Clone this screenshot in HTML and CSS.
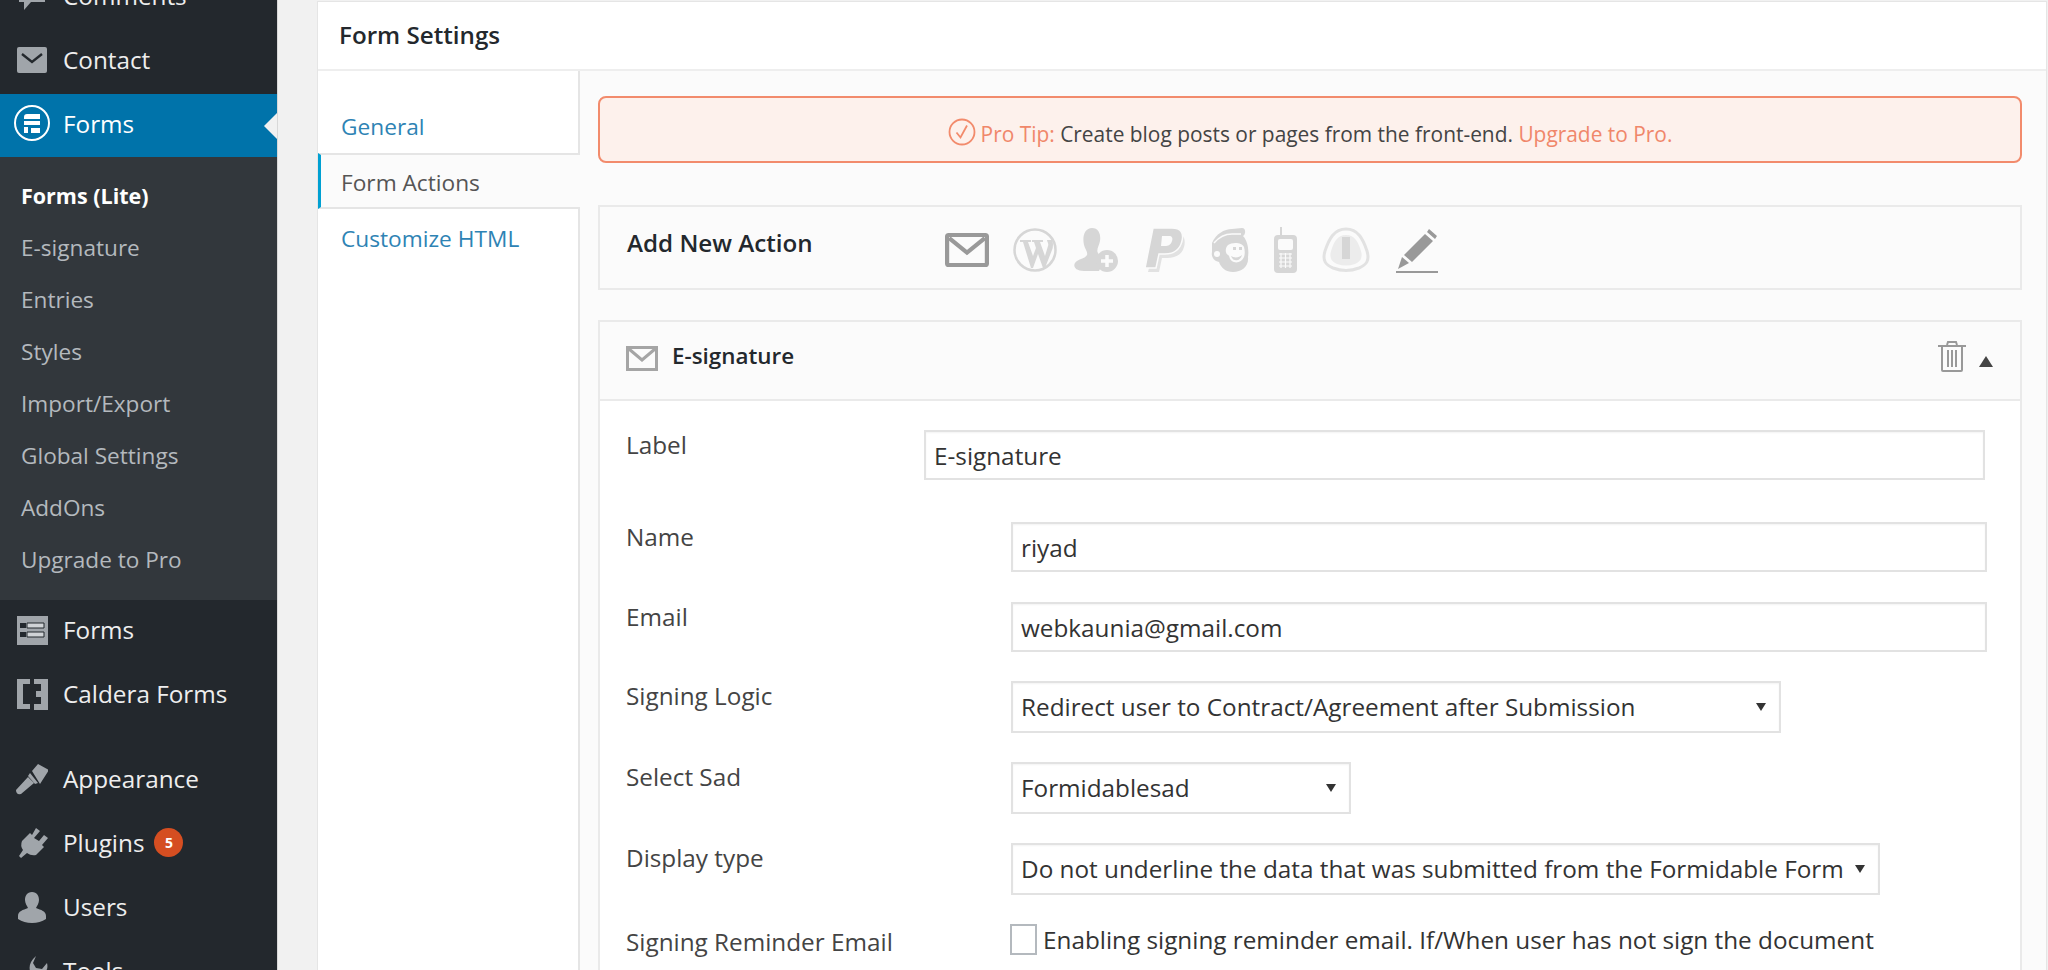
FILE: index.html
```html
<!DOCTYPE html>
<html>
	<head>
		<meta charset="UTF-8">
		<title>Form Settings</title>
		<link rel="stylesheet" href="styles.css">
	</head>
	<body>
		<div id="adminMenu">
			<ul class="menu">
				<li class="menu-item">
					<svg class="menu-icon" viewBox="0 0 32 32"><path d="M3 3h26v19H15l-7 8v-8H3z"/></svg>Comments
				</li>
				<li class="menu-item contact">
					<svg class="menu-icon" viewBox="0 0 32 32"><path d="M3 3h26a2 2 0 0 1 2 2v22a2 2 0 0 1-2 2H3a2 2 0 0 1-2-2V5a2 2 0 0 1 2-2z"/><path class="cut" d="M6 10l10 8 10-8" fill="none" stroke-width="2.4"/></svg>Contact
				</li>
				<li class="menu-item current">
					<svg class="menu-icon big" viewBox="0 0 38 38">
						<circle cx="19" cy="19" r="17" fill="none" stroke="#fff" stroke-width="2"/>
						<path fill="#fff" d="M11 13q0-3 3-3h13v5H11zM11 17h16v4H11zM11 23h4v6h-4zM18 24h9v5h-9z"/>
					</svg>Forms
				</li>
			</ul>
			<ul class="submenu">
				<li class="active">Forms (Lite)</li>
				<li>E-signature</li>
				<li>Entries</li>
				<li>Styles</li>
				<li>Import/Export</li>
				<li>Global Settings</li>
				<li>AddOns</li>
				<li>Upgrade to Pro</li>
			</ul>
			<ul class="menu">
				<li class="menu-item">
					<svg class="menu-icon" viewBox="0 0 32 32"><path d="M1 2h31v29H1z"/><path class="hole" d="M4 9h6v5H4zM4 18h6v5H4z"/><path class="bar" d="M11 9h17v5H11zM11 18h17v5H11z"/></svg>Forms
				</li>
				<li class="menu-item">
					<svg class="menu-icon" viewBox="0 0 32 32"><path d="M1 1h13v5H7v20h7v5H1zM18 1h14v31H18v-6h7v-7h-5v-6h5V6h-7z"/></svg>Caldera Forms
				</li>
				<li class="menu-item gap">
					<svg class="menu-icon" viewBox="0 0 32 32"><path d="M16 8l6-7 11 6-9 14zM14 10l8 10-3 1-7-8zM12 14l6 6L5 31q-5 1-5-4z"/></svg>Appearance
				</li>
				<li class="menu-item">
					<svg class="menu-icon" viewBox="0 0 32 32"><path d="M20 1l4 3-6 7 5 3 5-6 4 3-6 7 2 2-8 8q-5 1-9-2l-6 5-2-2 4-6q-3-4-1-9l8-8 2 2z"/></svg>Plugins<span class="count">5</span>
				</li>
				<li class="menu-item">
					<svg class="menu-icon" viewBox="0 0 32 32"><path d="M16 1c5 0 7 4 7 8 0 3-2 6-3 8 5 2 10 3 10 8v3q-6 4-14 4t-14-4v-3c0-5 5-6 10-8-1-2-3-5-3-8 0-4 2-8 7-8z"/></svg>Users
				</li>
				<li class="menu-item">
					<svg class="menu-icon" viewBox="0 0 32 32"><path d="M20 1l-3 7 3 5 6 1 5-6q2 8-5 11-3 1-5 0L9 31q-5 2-7-3l12-12q-2-8 6-15z"/></svg>Tools
				</li>
			</ul>
		</div>

		<div id="panel">
			<div class="panel-title">Form Settings</div>
			<div class="panel-body">
				<ul class="tabs">
					<li>General</li>
					<li class="on">Form Actions</li>
					<li>Customize HTML</li>
				</ul>
				<div class="content">
					<div class="tip">
						<svg class="tip-icon" viewBox="0 0 28 28"><circle cx="14" cy="14" r="12.5"/><path d="M8.5 14.5l4 5 6.5-12"/></svg>
						<span class="tip-label">Pro Tip:</span>&nbsp;Create blog posts or pages from the front-end.&nbsp;<span class="tip-label">Upgrade to Pro.</span>
					</div>

					<div class="box add-action">
						<h3>Add New Action</h3>
						<div class="actions">
							<svg class="act a-wp" width="44" height="34" viewBox="0 0 42 33" preserveAspectRatio="none"><rect x="2" y="2" width="38" height="29" rx="1.5" fill="none" stroke="#999" stroke-width="4"/><path d="M4 5l17 14L38 5" fill="none" stroke="#999" stroke-width="4"/></svg>
							<svg class="act a-user" width="44" height="44" viewBox="0 0 44 44"><circle cx="22" cy="22" r="20.5" fill="none" stroke="#d6d6d6" stroke-width="2.5"/><path d="M7 12h11v2h-3l5 14 3-8-2-6h-2v-2h11v2h-3l5 14 3-10c1-3-1-4-1-6h5q2 5 0 10l-7 18h-2l-5-14-5 14h-2L10 14H7z" fill="#d6d6d6"/></svg>
							<svg class="act" width="44" height="44" viewBox="0 0 44 44" fill="#d6d6d6"><path d="M18 0c7 0 9 7 8 13-1 5-4 9-2 12 1 2 2 3 1 6-1 2 0 5 2 8l-2 4H10C1 43-1 38 1 35c2-4 10-4 12-8 1-3-2-6-3-10C8 8 11 0 18 0z"/><circle cx="33" cy="33" r="11" /><path d="M33 27v12M27 33h12" stroke="#fbfbfb" stroke-width="3.5"/></svg>
							<svg class="act" width="44" height="46" viewBox="0 0 44 46"><path d="M16 6h18c8 0 10 7 8 14-2 8-9 11-17 11h-5l-3 14H6z" fill="#e2e2e2"/><path d="M11 1h19c9 0 12 5 10 13-2 9-9 13-17 13h-6l-3 14H3z" fill="#d6d6d6" stroke="#fbfbfb" stroke-width="1.5"/><path d="M20 9h7c3 0 4 2 3 5-1 4-4 5-7 5h-4z" fill="#fbfbfb"/></svg>
							<svg class="act" width="40" height="46" viewBox="0 0 40 46"><path d="M2 16C6 7 14 2 22 2l10-1c4 0 4 6 1 8 5 5 6 15 5 21 1 9-6 15-15 15-7 0-12-4-14-10-5-1-8-5-7-10z" fill="#d6d6d6"/><path d="M4 16C9 10 15 7 22 7l9 0" fill="none" stroke="#fbfbfb" stroke-width="1.5"/><path d="M18 18c4-3 14-3 16 2 1 4 1 7 0 10-2 5-8 7-12 4-3-2-2-5-4-6-3-2-3-7 0-10z" fill="#fbfbfb"/><path d="M21 29c3 2 8 2 11-1-1 4-4 6-7 5-2 0-3-2-4-4zM23 20h3v3h-3zM29 20h3v3h-3z" fill="#d6d6d6"/><circle cx="7" cy="27" r="3" fill="#fbfbfb"/></svg>
							<svg class="act" width="23" height="46" viewBox="0 0 23 46"><path d="M6 0h2v8h11q4 0 4 4v30q0 4-4 4H4q-4 0-4-4V12q0-4 4-4h2z" fill="#d6d6d6"/><rect x="4" y="12" width="15" height="11" rx="2" fill="#fbfbfb"/><path d="M5 27h13M5 31h13M5 35h13M5 39h13M7 26v15M11.500 26v15M16 26v15" stroke="#fbfbfb" stroke-width="1.200"/></svg>
							<svg class="act" width="50" height="46" viewBox="0 0 50 46"><path d="M25 2c12 0 17 10 21 22 3 10-1 14-8 17-8 3-18 3-26 0-7-3-11-7-8-17C8 12 13 2 25 2z" fill="none" stroke="#e2e2e2" stroke-width="3"/><path d="M25 8c9 0 12 7 15 16 2 7-1 11-6 13-6 2-12 2-18 0-5-2-8-6-6-13C13 15 16 8 25 8z" fill="#ececec"/><path d="M21 10h8v22h-8z" fill="#d6d6d6"/></svg>
							<svg class="act" width="44" height="46" viewBox="0 0 44 46"><path d="M34 2l8 7-2 3-8-7zM30 7l8 7-21 21-8-7z" fill="#999"/><path d="M7 30l7 6-11 6z" fill="#999"/><path d="M1 45h42" stroke="#999" stroke-width="2"/></svg>
						</div>
					</div>

					<div class="box action">
						<div class="action-head">
							<svg class="head-icon" width="32" height="25" viewBox="0 0 32 25"><rect x="1.500" y="1.500" width="29" height="22" fill="none" stroke="#a5a5a5" stroke-width="3"/><path d="M3 3l13 11L29 3" fill="none" stroke="#a5a5a5" stroke-width="3"/></svg>
							<h4>E-signature</h4>
							<svg class="trash" width="28" height="31" viewBox="0 0 28 31" fill="none" stroke="#999" stroke-width="2"><path d="M0 5h28M9 4l1-3h8l1 3"/><path d="M4 5v24q0 1 1 1h18q1 0 1-1V5M10 9v17M14 9v17M18 9v17"/></svg>
							<span class="toggle"></span>
						</div>
						<div class="action-body">
							<div class="row first">
								<label>Label</label>
								<div class="field wide">E-signature</div>
							</div>
							<div class="row name">
								<label>Name</label>
								<div class="field">riyad</div>
							</div>
							<div class="row">
								<label>Email</label>
								<div class="field">webkaunia@gmail.com</div>
							</div>
							<div class="row">
								<label>Signing Logic</label>
								<div class="field select logic">Redirect user to Contract/Agreement after Submission</div>
							</div>
							<div class="row">
								<label>Select Sad</label>
								<div class="field select sad">Formidablesad</div>
							</div>
							<div class="row">
								<label>Display type</label>
								<div class="field select display">Do not underline the data that was submitted from the Formidable Form</div>
							</div>
							<div class="row last">
								<label>Signing Reminder Email</label>
								<div class="check"><span class="checkbox"></span>Enabling signing reminder email. If/When user has not sign the document</div>
							</div>
						</div>
					</div>
				</div>
			</div>
		</div>
	</body>
</html>
```

FILE: styles.css
```css
*{
	padding: 0;
	margin: 0;
	box-sizing: border-box;
}
html,body{
	height: 970px;
	overflow: hidden;
}
body{
	display: flex;
	background-color: #f1f1f1;
	font-family: "Open Sans", sans-serif;
	font-size: 24.300px;
	color: #444;
}
ul{
	list-style: none;
}

/* left admin menu */
#adminMenu{
	width: 278px;
	flex: none;
	height: 970px;
	background-color: #23282d;
	border-right: 1px solid #d8d8d8;
	overflow: hidden;
}
.menu:first-child{
	margin-top: -34px;
}
.menu-item{
	height: 64px;
	display: flex;
	align-items: center;
	padding: 0 0 5px 16px;
	color: #eee;
	position: relative;
}
.menu-icon{
	width: 32px;
	height: 32px;
	margin-right: 15px;
	fill: #a0a5aa;
	flex: none;
}
.menu-icon .cut{
	stroke: #23282d;
}
.menu-icon .hole{
	fill: #23282d;
}
.menu-icon .bar{
	fill: #d0d3d6;
	stroke: #23282d;
}
.menu-icon.big{
	width: 38px;
	height: 38px;
	margin-left: -3px;
	margin-right: 12px;
}
.menu-item.current{
	height: 63px;
	background-color: #0073aa;
	color: #fff;
}
.menu-item.current::after{
	content: "";
	position: absolute;
	right: 0;
	top: 19px;
	border: 13px solid transparent;
	border-left-width: 0;
	border-right-color: #f1f1f1;
}
.menu-item.gap{
	margin-top: 21px;
}
.count{
	width: 29px;
	height: 29px;
	margin-left: 10px;
	border-radius: 50%;
	background-color: #d54e21;
	color: #fff;
	font-size: 14px;
	font-weight: 700;
	line-height: 29px;
	text-align: center;
}
.submenu{
	height: 443px;
	padding-top: 13.500px;
	background-color: #32373c;
	font-size: 22.600px;
	color: #b4b9be;
}
.submenu li{
	height: 51.900px;
	line-height: 51.900px;
	padding-left: 21px;
}
.submenu .active{
	line-height: 50px;
	color: #fff;
	font-size: 21.500px;
	font-weight: 700;
}

/* form settings panel */
#panel{
	width: 1730px;
	height: 970px;
	margin: 1px 0 0 39px;
	flex: none;
	background-color: #fff;
	border: 1px solid #e5e5e5;
	border-bottom: 0;
}
.panel-title{
	height: 69px;
	line-height: 65px;
	padding-left: 21px;
	border-bottom: 2px solid #eee;
	font-size: 24.200px;
	font-weight: 600;
	color: #23282d;
}
.panel-body{
	display: flex;
	height: 900px;
}
.tabs{
	width: 262px;
	flex: none;
	padding-top: 26px;
	border-right: 2px solid #e5e5e5;
	font-size: 22.700px;
	color: #2e83b4;
}
.tabs li{
	height: 56px;
	line-height: 59px;
	padding-left: 23px;
}
.tabs .on{
	line-height: 56px;
	background-color: #fbfbfb;
	margin-right: -2px;
	border-top: 2px solid #e5e5e5;
	border-bottom: 2px solid #e5e5e5;
	border-left: 3px solid #00a0d2;
	padding-left: 20px;
	color: #555;
}
.content{
	flex: 1;
	min-width: 0;
	background-color: #fbfbfb;
	padding: 25px 24px 0 18px;
}

.tip{
	height: 67px;
	display: flex;
	align-items: center;
	justify-content: center;
	padding-top: 8px;
	background-color: #fdf1ec;
	border: 2px solid #f28b6c;
	border-radius: 8px;
	font-size: 20.900px;
	color: #444;
}
.tip-icon{
	width: 28px;
	height: 28px;
	margin: -4px 5px 0 0;
	fill: none;
	stroke: #f28b6c;
	stroke-width: 1.800;
}
.tip-label{
	color: #f0876a;
}

.box{
	border: 2px solid #eaeaea;
}
.add-action{
	height: 85px;
	margin-top: 42px;
	display: flex;
	align-items: center;
	padding-left: 27px;
}
.add-action h3{
	width: 318px;
	flex: none;
	margin-top: -11px;
	font-size: 24.200px;
	font-weight: 600;
	color: #23282d;
}
.actions{
	display: flex;
	align-items: center;
	margin-top: 5px;
}
.act{
	flex: none;
	margin-right: 24px;
}
.a-user{
	margin-right: 17px;
}
.action{
	margin-top: 30px;
	height: 700px;
	background-color: #fff;
}
.action-head{
	height: 79px;
	display: flex;
	align-items: center;
	background-color: #fbfbfb;
	border-bottom: 2px solid #eaeaea;
	padding: 0 27px 0 26px;
}
.head-icon{
	margin: -4px 14px 0 0;
	flex: none;
}
.action-head h4{
	flex: 1;
	margin-top: -10px;
	font-size: 22.400px;
	font-weight: 600;
	color: #23282d;
}
.trash{
	margin: -8px 13px 0 0;
}
.toggle{
	width: 0;
	height: 0;
	margin-top: 2px;
	border-left: 7px solid transparent;
	border-right: 7px solid transparent;
	border-bottom: 11px solid #444;
}

.action-body{
	padding: 29px 33px 0 26px;
}
.row{
	display: flex;
	margin-bottom: 29px;
	align-items: flex-start;
}
.row label{
	width: 385px;
	flex: none;
	font-size: 24.300px;
	line-height: 30px;
	white-space: nowrap;
	color: #444;
}
.row.first{
	margin-bottom: 42px;
}
.row.first label{
	width: 298px;
}
.row.name{
	margin-bottom: 30px;
}
.field{
	height: 50px;
	flex: 1;
	min-width: 0;
	line-height: 47px;
	padding-left: 8px;
	background-color: #fff;
	border: 2px solid #e2e2e2;
	box-shadow: inset 0 1px 2px rgba(0,0,0,0.05);
	font-size: 24.300px;
	color: #333;
	white-space: nowrap;
	overflow: hidden;
}
.field.wide{
	margin-right: 2px;
}
.select{
	flex: none;
	height: 52px;
	position: relative;
	padding-right: 24px;
}
.select::after{
	content: "";
	position: absolute;
	right: 13px;
	top: 20px;
	border-left: 5px solid transparent;
	border-right: 5px solid transparent;
	border-top: 8px solid #333;
}
.logic{
	width: 770px;
}
.sad{
	width: 340px;
}
.display{
	width: 869px;
}
.row.last label{
	margin-top: 3px;
}
.check{
	display: flex;
	align-items: center;
	margin-left: -1px;
	font-size: 24.300px;
	line-height: 30px;
	white-space: nowrap;
	color: #333;
}
.checkbox{
	width: 27px;
	height: 31px;
	margin-right: 6px;
	flex: none;
	border: 2px solid #b4b9be;
	background-color: #fff;
}
```
